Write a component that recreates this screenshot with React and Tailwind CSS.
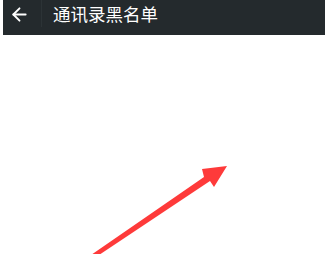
import { ArrowLeft } from 'lucide-react';

export default function App() {
  return (
    <div className="relative w-[327px] h-[254px] bg-white overflow-hidden" style={{ fontFamily: '"Noto Sans CJK SC", "Noto Sans", sans-serif' }}>
      <div className="ml-[3px] mr-[2px] h-[35px] bg-[#242a2d]">
        <div className="h-[27px] flex items-center">
          <div className="w-[39px] h-full flex items-center justify-center border-r border-[#2c3336]">
            <ArrowLeft size={21} strokeWidth={2.2} className="text-white mt-[2px] -ml-[5px]" />
          </div>
          <span className="ml-[11px] text-[17.5px] text-white leading-none">通讯录黑名单</span>
        </div>
      </div>
      <svg className="absolute left-0 top-0" width="327" height="254" viewBox="0 0 327 254">
        <polygon points="91,255 204,177 202,169 227,166 214,187 210,181 99,255" fill="#fe3a3a" />
      </svg>
    </div>
  );
}
